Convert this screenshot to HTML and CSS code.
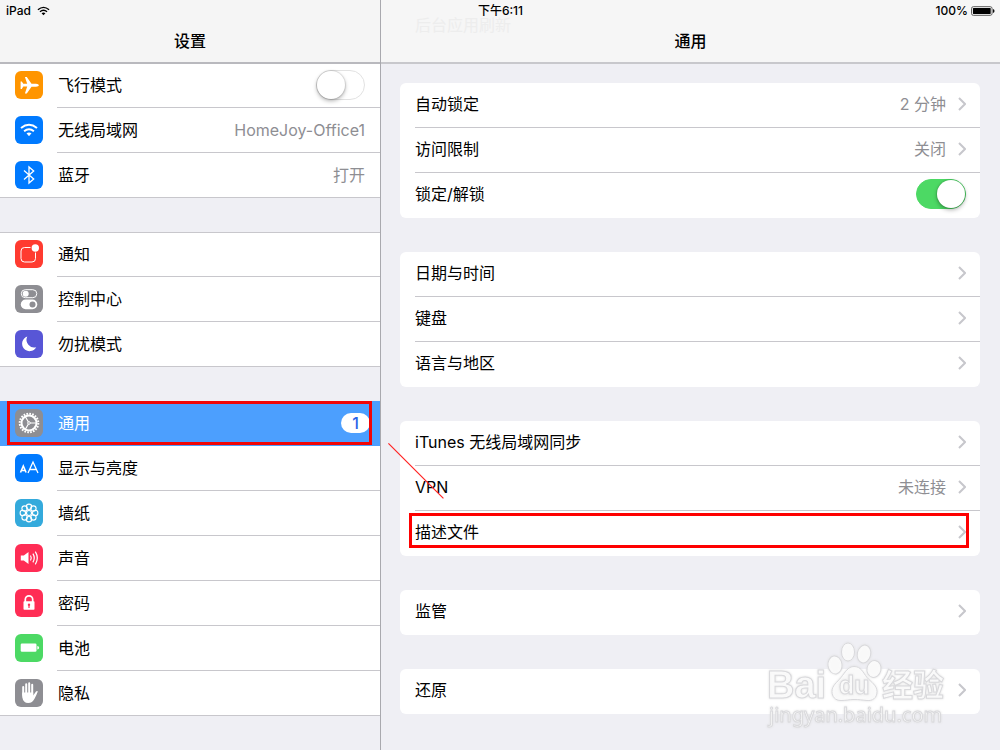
FILE: index.html
```html
<!DOCTYPE html>
<html lang="zh-CN">
<head>
<meta charset="utf-8">
<title>设置</title>
<link rel="stylesheet" href="styles.css">
</head>
<body>
<div class="status">
  <div class="status-left">
    <span>iPad</span>
    <svg class="status-wifi" viewBox="0 0 14 10" aria-hidden="true"><g fill="none" stroke="#000" stroke-width="1.5"><path d="M1 3.6Q7-1.4 13 3.6"/><path d="M3.2 5.8Q7 2.6 10.8 5.8"/></g><path d="M4.9 7.3Q7 5.7 9.1 7.3L7 9.5z"/></svg>
  </div>
  <time class="status-time">下午6:11</time>
  <div class="status-right">
    <span>100%</span>
    <svg class="status-battery" viewBox="0 0 25 10" aria-hidden="true"><rect x=".5" y=".5" width="21.5" height="9" rx="2" fill="none" stroke="#555"/><rect x="2" y="2" width="18.5" height="6" rx=".5"/><path d="M23 3q1.5.4 1.5 2T23 7z"/></svg>
  </div>
</div>

<div class="split">
  <nav class="sidebar" aria-label="设置">
    <header class="bar bar-side"><h1 class="bar-title">设置</h1></header>

    <ul class="group">
      <li><label class="item">
        <svg class="icon orange" viewBox="0 0 28 28"><path fill="#fff" d="M24 14.2q-.4 1.4-3 1.5h-4.5L11.8 22.500h-1.900l2.300-6.900H8.300L6.800 18H5.600V10.500h1.200l1.500 2.300h3.900L9.900 6h1.900l4.700 6.700H21q2.600.1 3 1.500z"/></svg>
        <span class="item-body"><span class="name">飞行模式</span><input class="switch" type="checkbox" role="switch"></span>
      </label></li>
      <li><a class="item" href="#wlan">
        <svg class="icon blue" viewBox="0 0 28 28"><g fill="none" stroke="#fff" stroke-width="2"><path d="M6 12Q14 5.600 22 12"/><path d="M9.100 15.200Q14 11.300 18.900 15.200"/></g><path fill="#fff" d="M11.500 17.300Q14 15.500 16.500 17.300L14 20.200z"/></svg>
        <span class="item-body"><span class="name">无线局域网</span><span class="value">HomeJoy-Office1</span></span>
      </a></li>
      <li><a class="item" href="#bluetooth">
        <svg class="icon blue" viewBox="0 0 28 28"><path fill="none" stroke="#fff" stroke-width="1.300" d="M9 9.500 18.700 18 14 22V6l4.700 4L9 18.500"/></svg>
        <span class="item-body"><span class="name">蓝牙</span><span class="value">打开</span></span>
      </a></li>
    </ul>

    <ul class="group ruled">
      <li><a class="item" href="#notifications">
        <svg class="icon red" viewBox="0 0 28 28"><path fill="none" stroke="#fff" d="M15.500 7.500H9.500q-3.500 0-3.500 3.500v7.500Q6 22 9.500 22H17q3.500 0 3.500-3.500v-6"/><circle cx="20.300" cy="8" r="3.700" fill="#fff"/></svg>
        <span class="item-body"><span class="name">通知</span></span>
      </a></li>
      <li><a class="item" href="#control">
        <svg class="icon gray" viewBox="0 0 28 28"><rect x="6.300" y="4.700" width="15.500" height="8" rx="4" fill="none" stroke="#fff"/><circle cx="10.700" cy="8.700" r="3" fill="#fff"/><rect x="5.800" y="14.600" width="16.500" height="9.600" rx="4.800" fill="#fff"/><circle cx="17.500" cy="19.400" r="3" fill="#8e8e93"/></svg>
        <span class="item-body"><span class="name">控制中心</span></span>
      </a></li>
      <li><a class="item" href="#dnd">
        <svg class="icon purple" viewBox="0 0 28 28"><path fill="#fff" d="M12.300 6.500A7.500 7.500 0 1 0 21.200 17.200 7.700 7.700 0 0 1 12.300 6.500z"/></svg>
        <span class="item-body"><span class="name">勿扰模式</span></span>
      </a></li>
    </ul>

    <ul class="group">
      <li><a class="item selected" href="#general" aria-current="page">
        <svg class="icon gray" viewBox="0 0 28 28"><g fill="none" stroke="#fff"><circle cx="14" cy="14" r="9.300" stroke-width="2" stroke-dasharray="1.700 1.222"/><circle cx="14" cy="14" r="7.500" stroke-width="2"/><path stroke-width="1.200" d="M14 14h7M14 14l-3.500-6M14 14l-3.500 6"/><circle cx="14" cy="14" r="1.300" fill="#8e8e93"/></g></svg>
        <span class="item-body"><span class="name">通用</span><span class="badge">1</span></span>
        <span class="mark mark-side"></span>
      </a></li>
      <li><a class="item" href="#display">
        <svg class="icon blue" viewBox="0 0 28 28"><g fill="none" stroke="#fff"><path stroke-width="1.600" d="M5.500 18.500 8.300 12l2.800 6.500M6.500 16.500h3.600"/><path stroke-width="1.300" d="M13 19 18 8l5 11M14.700 15.500h6.600"/></g></svg>
        <span class="item-body"><span class="name">显示与亮度</span></span>
      </a></li>
      <li><a class="item" href="#wallpaper">
        <svg class="icon cyan" viewBox="0 0 28 28"><g fill="none" stroke="#fff" stroke-width="1.100"><circle cx="14" cy="14" r="2.500"/><circle cx="14" cy="7.800" r="2.700"/><circle cx="18.400" cy="9.600" r="2.700"/><circle cx="20.200" cy="14" r="2.700"/><circle cx="18.400" cy="18.400" r="2.700"/><circle cx="14" cy="20.200" r="2.700"/><circle cx="9.600" cy="18.400" r="2.700"/><circle cx="7.800" cy="14" r="2.700"/><circle cx="9.600" cy="9.600" r="2.700"/></g></svg>
        <span class="item-body"><span class="name">墙纸</span></span>
      </a></li>
      <li><a class="item" href="#sounds">
        <svg class="icon pink" viewBox="0 0 28 28"><path fill="#fff" d="M5.800 11.500h3L13.500 8v12l-4.700-3.500h-3z"/><g fill="none" stroke="#fff" stroke-width="1.200"><path d="M15.500 11.500q1.500 2.500 0 5"/><path d="M17.900 9.600q2.700 4.400 0 8.800"/><path d="M20.300 7.600q4 6.400 0 12.800"/></g></svg>
        <span class="item-body"><span class="name">声音</span></span>
      </a></li>
      <li><a class="item" href="#passcode">
        <svg class="icon pink" viewBox="0 0 28 28"><path fill="none" stroke="#fff" stroke-width="1.700" d="M10.300 13V10.500a3.700 3.700 0 0 1 7.400 0V13"/><rect x="8.500" y="12.300" width="11" height="8.400" rx=".8" fill="#fff"/><path fill="#ff2d55" d="M14 14.500a1.300 1.300 0 0 1 .6 2.400V19h-1.200v-2.100a1.300 1.300 0 0 1 .6-2.400z"/></svg>
        <span class="item-body"><span class="name">密码</span></span>
      </a></li>
      <li><a class="item" href="#battery">
        <svg class="icon green" viewBox="0 0 28 28"><rect x="5.700" y="9.500" width="15.800" height="8.300" rx="1.300" fill="#fff"/><path fill="#fff" d="M22.300 12q1.800.2 1.800 1.700t-1.800 1.700z"/></svg>
        <span class="item-body"><span class="name">电池</span></span>
      </a></li>
      <li><a class="item" href="#privacy">
        <svg class="icon gray" viewBox="0 0 28 28"><g stroke="#fff" stroke-width="2" stroke-linecap="round"><path d="M8.200 8v8M11.200 5.200V15M14.200 4.200V15M17.200 5.700V16"/></g><path fill="#fff" d="M7.200 13.500h11v3l2.800-4q1.200-.8 1.800 0-1.300 3.600-3.300 7.300-2 4.200-6.300 4.200-5 0-6-6z"/></svg>
        <span class="item-body"><span class="name">隐私</span></span>
      </a></li>
    </ul>
  </nav>

  <main class="detail">
    <header class="bar bar-main"><span class="ghost" aria-hidden="true">后台应用刷新</span><h2 class="bar-title">通用</h2></header>
    <div class="cards">
      <ul class="card">
        <li><a class="row" href="#autolock"><span class="name">自动锁定</span><span class="value">2 分钟</span><svg class="chev" viewBox="0 0 8 14"><path d="M1 1l6 6-6 6"/></svg></a></li>
        <li><a class="row" href="#restrictions"><span class="name">访问限制</span><span class="value">关闭</span><svg class="chev" viewBox="0 0 8 14"><path d="M1 1l6 6-6 6"/></svg></a></li>
        <li><label class="row"><span class="name">锁定/解锁</span><input class="switch" type="checkbox" role="switch" checked></label></li>
      </ul>
      <ul class="card">
        <li><a class="row" href="#date"><span class="name">日期与时间</span><svg class="chev" viewBox="0 0 8 14"><path d="M1 1l6 6-6 6"/></svg></a></li>
        <li><a class="row" href="#keyboard"><span class="name">键盘</span><svg class="chev" viewBox="0 0 8 14"><path d="M1 1l6 6-6 6"/></svg></a></li>
        <li><a class="row" href="#language"><span class="name">语言与地区</span><svg class="chev" viewBox="0 0 8 14"><path d="M1 1l6 6-6 6"/></svg></a></li>
      </ul>
      <ul class="card">
        <li><a class="row" href="#itunes"><span class="name">iTunes 无线局域网同步</span><svg class="chev" viewBox="0 0 8 14"><path d="M1 1l6 6-6 6"/></svg></a></li>
        <li><a class="row" href="#vpn"><span class="name">VPN</span><span class="value">未连接</span><svg class="chev" viewBox="0 0 8 14"><path d="M1 1l6 6-6 6"/></svg></a></li>
        <li><a class="row" href="#profiles"><span class="name">描述文件</span><svg class="chev" viewBox="0 0 8 14"><path d="M1 1l6 6-6 6"/></svg><span class="mark mark-main"></span></a></li>
        <li class="pointer" aria-hidden="true"><svg class="pointer-line" viewBox="0 0 56 56"><polygon fill="#ff2020" points="0,.8 .8,0 55.800,55 55,55.800"/></svg></li>
      </ul>
      <ul class="card">
        <li><a class="row" href="#supervision"><span class="name">监管</span><svg class="chev" viewBox="0 0 8 14"><path d="M1 1l6 6-6 6"/></svg></a></li>
      </ul>
      <ul class="card">
        <li><a class="row" href="#reset"><span class="name">还原</span><svg class="chev" viewBox="0 0 8 14"><path d="M1 1l6 6-6 6"/></svg></a></li>
      </ul>
    </div>
  </main>
</div>

<svg class="watermark" viewBox="0 0 190 100" role="img" aria-label="Baidu 经验">
  <g class="wm-shape">
    <ellipse cx="75" cy="30" rx="7" ry="9" transform="rotate(-8 75 30)"/>
    <ellipse cx="88" cy="17" rx="6.500" ry="9"/>
    <ellipse cx="104" cy="19" rx="6.700" ry="9" transform="rotate(12 104 19)"/>
    <ellipse cx="114" cy="34" rx="7" ry="8.500" transform="rotate(12 114 34)"/>
    <path d="M94 31.500c7 0 9 6 13 11 4 4.500 10 8 10 14 0 7-5 9.500-10 9-5-.5-8-1-13-1s-8 1-13 1c-6 0-9-4-9-9 0-6 5-9 9-14 4-5 7-11 13-11z"/>
  </g>
  <g class="wm-text">
    <text class="wm-bai" x="7" y="63">Bai</text>
    <text class="wm-du" x="79" y="59">du</text>
    <text class="wm-cn" x="122" y="61">经验</text>
    <text class="wm-url" x="9" y="87">jingyan.baidu.com</text>
  </g>
</svg>
</body>
</html>
```
FILE: styles.css
```css
* { box-sizing: border-box; }
body {
  margin: 0;
  background: #efeff4;
  color: #000;
  font: 16px/24px Inter, "Noto Sans CJK SC", sans-serif;
}
ul { margin: 0; padding: 0; list-style: none; }
a { color: inherit; text-decoration: none; }
svg { display: block; flex: none; }

.status {
  position: absolute;
  z-index: 2;
  top: 0;
  left: 0;
  right: 0;
  display: grid;
  grid-template-columns: 1fr auto 1fr;
  align-items: center;
  height: 21px;
  padding: 0 5px 0 6px;
  font-size: 12px;
  line-height: 20px;
  font-weight: 500;
}
.status-left, .status-right { display: flex; align-items: center; gap: 6px; }
.status-right { justify-content: flex-end; gap: 3px; }
.status-wifi { width: 13px; height: 10px; }
.status-battery { width: 24px; height: 10px; }

.split {
  display: grid;
  grid-template-columns: 38% 1fr;
  min-height: 100vh;
}
.detail { border-left: 1px solid #a9a9ae; }
.bar {
  display: flex;
  justify-content: center;
  position: relative;
  height: 64px;
  padding-top: 29px;
  border-bottom: 2px solid #c8c8cc;
  background: #f6f6f6;
}
.bar-side { border-color: #b9b9be; background: #f5f5f5; }
.bar-title { margin: 0; font-size: 16px; line-height: 24px; font-weight: 500; }
.ghost { position: absolute; top: 13px; left: 34px; color: #ededed; }

.group { margin-bottom: 34px; background: #fff; }
.group.ruled { border-top: 1px solid #c8c7cc; }
.item {
  display: flex;
  align-items: center;
  gap: 14px;
  position: relative;
  height: 45px;
  padding-left: 15px;
}
.group.ruled li:first-child .item,
.group:first-of-type li:first-child .item { height: 44px; }
.item-body {
  display: flex;
  flex: 1;
  align-items: center;
  align-self: stretch;
  padding: 0 15px 1px 1px;
  border-bottom: 1px solid #c8c7cc;
}
.name { flex: 1; }
.value { color: #8e8e93; }
.item.selected { background: #4c9ffe; color: #fff; }
.selected .item-body { padding-right: 10px; border-color: transparent; }
.badge {
  width: 29px;
  border-radius: 10px;
  background: #fff;
  color: #2a63e8;
  line-height: 20px;
  font-weight: 500;
  text-align: center;
}

.icon { width: 28px; height: 28px; margin-bottom: 2px; border-radius: 6px; }
.orange { background: #ff9500; }
.blue { background: #007aff; }
.red { background: #ff3b30; }
.gray { background: #8e8e93; }
.purple { background: #5856d6; }
.cyan { background: #34aadc; }
.pink { background: #ff2d55; }
.green { background: #4cd964; }

.group li:last-child .item { border-bottom: 1px solid #c8c7cc; }
.group li:last-child .item-body { border-bottom: 0; }
.group li:last-child .icon { margin-bottom: 1px; }

.switch {
  appearance: none;
  display: flex;
  align-items: center;
  width: 49px;
  height: 30px;
  margin: 0;
  border: 1px solid #e2e2e2;
  border-radius: 15px;
  background: #fff;
}
.switch::before {
  content: "";
  width: 28px;
  height: 28px;
  border-radius: 50%;
  background: #fff;
  box-shadow: 0 2px 4px rgba(0, 0, 0, .3), 0 0 1px 1px rgba(0, 0, 0, .1);
}
.switch:checked {
  justify-content: flex-end;
  width: 50px;
  border-color: #4cd964;
  background: #4cd964;
}

.cards {
  display: flex;
  flex-direction: column;
  gap: 34px;
  padding: 19px 20px 34px 19px;
}
.card { position: relative; border-radius: 6px; background: #fff; }
.row {
  display: flex;
  align-items: center;
  gap: 12px;
  position: relative;
  height: 45px;
  margin-left: 15px;
  padding: 0 14px 2px 0;
  border-bottom: 1px solid #c8c7cc;
}
.card li:last-child .row, .row:has(.mark) { border-color: transparent; }
.chev {
  width: 8px;
  height: 14px;
  fill: none;
  stroke: #c7c7cc;
  stroke-width: 2;
}

.mark { position: absolute; border: 3px solid #f20505; }
.mark-side { top: 0; bottom: 1px; left: 7px; right: 8px; }
.mark-main { top: 2px; bottom: 7px; left: -6px; right: 11px; border-color: #fe0000; }
.pointer { position: absolute; top: 22px; left: -12px; }
.pointer-line { width: 56px; height: 56px; }

.watermark {
  position: absolute;
  top: 635px;
  right: 50px;
  width: 190px;
  height: 100px;
  pointer-events: none;
}
.wm-shape, .wm-text {
  fill: #fff;
  fill-opacity: .8;
  stroke: #d9d9dc;
  stroke-width: 1;
  filter: drop-shadow(0 0 1px #ddd);
}
.wm-bai { font: bold 38px "Liberation Sans", sans-serif; }
.wm-du { font: bold 25px "Liberation Sans", sans-serif; }
.wm-cn { font: bold 31px "Noto Sans CJK SC", sans-serif; }
.wm-url { font: 20px "Noto Sans", sans-serif; }
```
